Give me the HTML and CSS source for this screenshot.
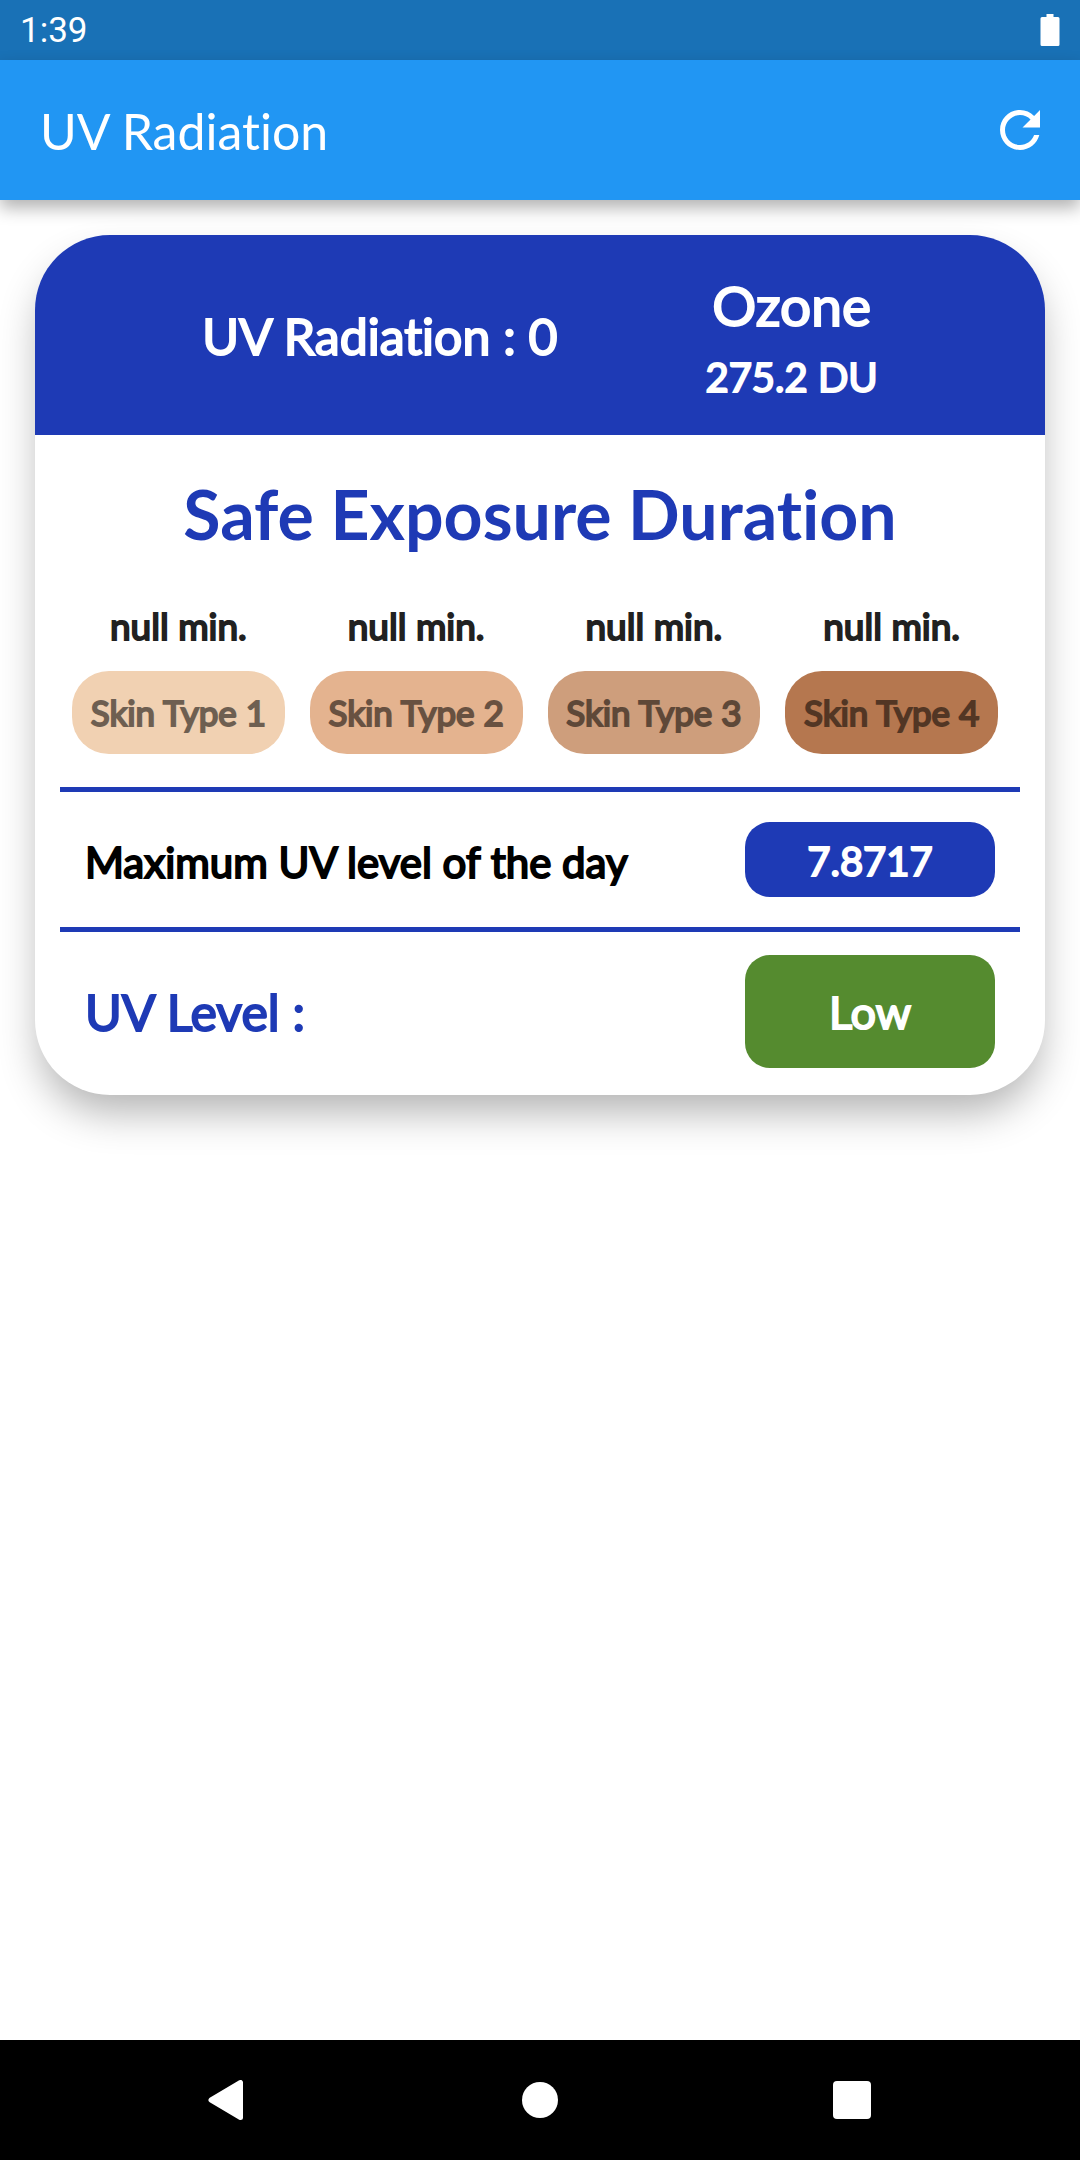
FILE: index.html
```html
<!DOCTYPE html>
<html lang="en">
<head>
<meta charset="utf-8">
<meta name="viewport" content="width=device-width, initial-scale=1">
<title>UV Radiation</title>
<link rel="stylesheet" href="styles.css">
</head>
<body>
<div class="status-bar">
  <span class="clock">1:39</span>
  <svg class="battery" viewBox="0 0 20 32" role="img" aria-label="Battery full"><path d="M6.500 0h7v3H18q1.500 0 1.500 1.500v26Q19.500 32 18 32H2Q.5 32 .5 30.500v-26Q.5 3 2 3h4.500z"/></svg>
</div>
<header class="app-bar">
  <h1 class="app-title">UV Radiation</h1>
  <button class="icon-button" type="button" aria-label="Refresh">
    <svg class="refresh-icon" viewBox="0 0 24 24"><path d="M17.650 6.350C16.200 4.900 14.210 4 12 4c-4.420 0-7.990 3.580-7.990 8s3.570 8 7.990 8c3.730 0 6.840-2.550 7.730-6h-2.080c-.82 2.330-3.040 4-5.650 4-3.310 0-6-2.690-6-6s2.690-6 6-6c1.660 0 3.140.69 4.220 1.780L13 11h7V4l-2.350 2.350z"/></svg>
  </button>
</header>
<main class="content">
  <section class="card">
    <div class="card-header">
      <p class="text-large">UV Radiation : 0</p>
      <div class="ozone">
        <p class="ozone-label">Ozone</p>
        <p class="ozone-value">275.2 DU</p>
      </div>
    </div>
    <div class="card-body">
      <h2 class="section-title">Safe Exposure Duration</h2>
      <div class="skin-types">
        <div class="skin"><span class="duration">null min.</span><button class="chip chip-1" type="button" disabled><span class="chip-label">Skin Type 1</span></button></div>
        <div class="skin"><span class="duration">null min.</span><button class="chip chip-2" type="button" disabled><span class="chip-label">Skin Type 2</span></button></div>
        <div class="skin"><span class="duration">null min.</span><button class="chip chip-3" type="button" disabled><span class="chip-label">Skin Type 3</span></button></div>
        <div class="skin"><span class="duration">null min.</span><button class="chip chip-4" type="button" disabled><span class="chip-label">Skin Type 4</span></button></div>
      </div>
      <hr class="divider">
      <div class="row">
        <p class="max-label">Maximum UV level of the day</p>
        <div class="badge">7.8717</div>
      </div>
      <hr class="divider">
      <div class="row row-level">
        <p class="text-large">UV Level :</p>
        <div class="badge badge-level">Low</div>
      </div>
    </div>
  </section>
</main>
<nav class="nav-bar" aria-label="System">
  <button class="nav-button" type="button" aria-label="Back"><svg class="nav-icon" viewBox="0 0 40 40"><path d="M32.500 2.500v35L3 20z" stroke-width="5" stroke-linejoin="round" stroke="#fff"/></svg></button>
  <button class="nav-button" type="button" aria-label="Home"><svg class="nav-icon" viewBox="0 0 40 40"><circle cx="20" cy="20" r="18"/></svg></button>
  <button class="nav-button" type="button" aria-label="Recent apps"><svg class="nav-icon" viewBox="0 0 40 40"><rect x="1" y="1" width="38" height="38" rx="4"/></svg></button>
</nav>
</body>
</html>
```
FILE: styles.css
```css
:root {
  --blue: #1e3ab5;
  --green: #558b2f;
}

* {
  box-sizing: border-box;
}

body {
  margin: 0;
  min-height: 100vh;
  display: flex;
  flex-direction: column;
  background: #fff;
  font-family: Lato, "Liberation Sans", sans-serif;
  font-size: 40px;
  line-height: 1.2;
  font-variant-ligatures: none;
}

h1,
h2,
p {
  margin: 0;
  font-weight: 400;
}

button {
  border: 0;
  padding: 0;
  background: none;
  font: inherit;
  font-variant-ligatures: none;
}

svg {
  display: block;
  fill: #fff;
}

.status-bar {
  height: 60px;
  padding: 0 20px;
  display: flex;
  align-items: center;
  justify-content: space-between;
  background: #1971b6;
  color: #fff;
}

.clock {
  padding-top: 2px;
  font: 35px/42px Roboto, sans-serif;
}

.battery {
  width: 20px;
  height: 32px;
}

.app-bar {
  height: 140px;
  padding: 0 30px 0 40px;
  display: flex;
  align-items: center;
  justify-content: space-between;
  background: #2196f3;
  color: #fff;
  box-shadow: 0 8px 16px rgba(0, 0, 0, 0.3);
}

.app-title {
  padding-top: 2px;
  font-size: 50px;
}

.refresh-icon {
  width: 60px;
  height: 60px;
}

.content {
  flex: 1;
  padding: 35px;
}

.card {
  border-radius: 75px;
  overflow: hidden;
  background: #fff;
  box-shadow: 0 22px 40px -5px rgba(0, 0, 0, 0.3);
}

.card-header {
  height: 200px;
  padding-top: 2px;
  display: flex;
  align-items: center;
  justify-content: center;
  gap: 148px;
  background: var(--blue);
  color: #fff;
}

/* Emboldened regular weight, shared by all labels of the card */
.text-large,
.ozone,
.duration,
.chip-label,
.max-label,
.badge {
  -webkit-text-stroke: 2px currentColor;
}

.text-large {
  font-size: 50px;
}

.ozone {
  display: flex;
  flex-direction: column;
  align-items: center;
  gap: 15px;
}

.ozone-label {
  font-size: 55px;
}

.card-body {
  padding: 38px 25px 27px;
  display: flex;
  flex-direction: column;
}

.section-title {
  font-size: 68px;
  line-height: 82px;
  font-weight: 700;
  text-align: center;
  color: var(--blue);
}

.skin-types {
  margin: 50px 22px 33px 12px;
  display: grid;
  grid-template-columns: repeat(4, 1fr);
  gap: 25px;
}

.skin {
  display: flex;
  flex-direction: column;
  gap: 24px;
  text-align: center;
  font-size: 35px;
  line-height: 42px;
}

.duration {
  font-size: 37px;
  color: #212121;
}

.chip {
  height: 83px;
  padding-bottom: 2px;
  border-radius: 37px;
  color: #000;
}

.chip-label {
  opacity: 0.54;
}

.chip-1 { background: #f1d1b2; }
.chip-2 { background: #e4b38f; }
.chip-3 { background: #ce9e7c; }
.chip-4 { background: #b5774f; }

.divider {
  width: 100%;
  height: 5px;
  margin: 0;
  border: 0;
  background: var(--blue);
}

.row {
  padding: 30px 25px;
  display: flex;
  align-items: center;
  justify-content: space-between;
}

.row-level {
  padding: 23px 25px 0;
  color: var(--blue);
}

.max-label {
  padding-top: 6px;
  font-size: 42px;
  color: #000;
}

.badge {
  width: 250px;
  height: 75px;
  padding-top: 2px;
  display: flex;
  align-items: center;
  justify-content: center;
  border-radius: 25px;
  background: var(--blue);
  color: #fff;
}

.badge-level {
  height: 113px;
  padding-top: 0;
  background: var(--green);
  font-size: 45px;
}

.nav-bar {
  height: 120px;
  padding: 0 72px;
  display: flex;
  background: #000;
}

.nav-button {
  flex: 1;
  display: flex;
  align-items: center;
  justify-content: center;
}

.nav-icon {
  width: 40px;
  height: 40px;
}
```
